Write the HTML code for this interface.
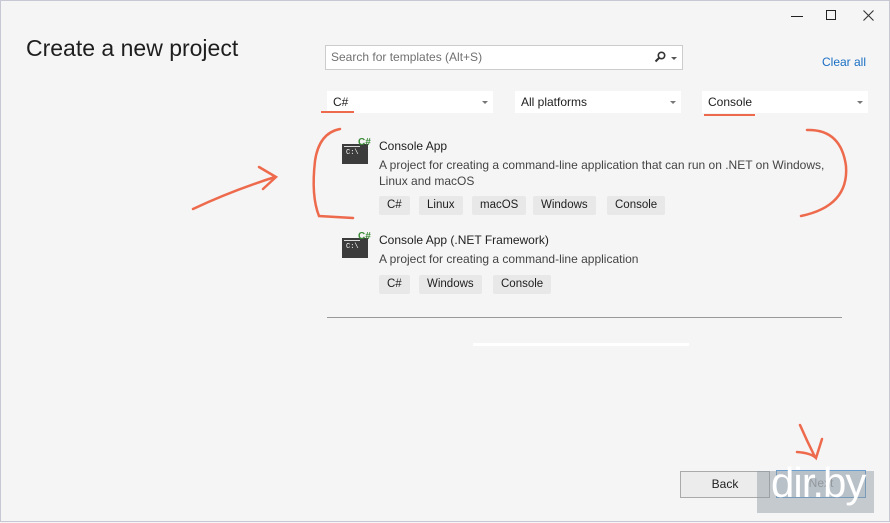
<!DOCTYPE html>
<html><head><meta charset="utf-8"><style>
*{margin:0;padding:0;box-sizing:border-box}
body{width:890px;height:522px;background:#f5f5f5;font-family:"Segoe UI","Liberation Sans",sans-serif;position:relative;overflow:hidden;border:1px solid #c8c8d4;color:#1e1e1e}
.a{position:absolute}
h1{position:absolute;left:25px;top:34px;font-size:23px;font-weight:normal;color:#1e1e1e}
.search{left:324px;top:44px;width:358px;height:25px;background:#fff;border:1px solid #ccc;font-size:12px;color:#717171;padding:4px 5px}
.dd{background:#fff;height:22px;font-size:12px;padding:4px 6px;color:#1e1e1e}
.arr{position:absolute;right:5px;top:10px;width:0;height:0;border-left:3px solid transparent;border-right:3px solid transparent;border-top:3px solid #777}
.t{font-size:12px;color:#1e1e1e}
.d{font-size:12px;color:#444;line-height:16px}
.tag{position:absolute;height:19px;background:#e8e8e8;border-radius:2px;font-size:11.5px;padding:3px 8px;color:#1e1e1e;line-height:13px}
.ic{position:absolute;width:26px;height:20px;background:#3c3c3c}
.ic:before{content:"";position:absolute;left:2px;top:2px;width:16px;height:1px;background:#ddd}
.ic span{position:absolute;left:4px;top:5px;color:#fff;font-size:7px;font-family:"Liberation Mono",monospace}
.cs{position:absolute;color:#388a34;font-size:10px;font-weight:bold}
.red{position:absolute;background:#ee6a4d}
</style></head><body>
<div class="a" style="left:790px;top:15px;width:12px;height:1px;background:#222"></div>
<div class="a" style="left:825px;top:9px;width:10px;height:10px;border:1px solid #222"></div>
<svg class="a" style="left:862px;top:9px" width="11" height="11"><path d="M0.5 0.5L10.5 10.5M10.5 0.5L0.5 10.5" stroke="#333" stroke-width="1.1"/></svg>
<h1>Create a new project</h1>
<div class="a search">Search for templates (Alt+S)
<svg style="position:absolute;right:16px;top:5px" width="12" height="12"><circle cx="7.5" cy="4.5" r="3.2" fill="none" stroke="#333" stroke-width="1.6"/><path d="M5.5 6.5L1.5 10.5" stroke="#333" stroke-width="2"/></svg>
<div style="position:absolute;right:5px;top:11px;border-left:3px solid transparent;border-right:3px solid transparent;border-top:3px solid #555"></div></div>
<div class="a" style="left:821px;top:54px;font-size:12px;color:#1a6fc4">Clear all</div>
<div class="a dd" style="left:326px;top:90px;width:166px">C#<div class="arr"></div></div>
<div class="a dd" style="left:514px;top:90px;width:166px">All platforms<div class="arr"></div></div>
<div class="a dd" style="left:701px;top:90px;width:166px">Console<div class="arr"></div></div>
<div class="red" style="left:320px;top:110px;width:33px;height:2px"></div>
<div class="red" style="left:703px;top:113px;width:51px;height:2px"></div>

<div class="ic" style="left:341px;top:143px"><span>C:\</span></div><div class="cs" style="left:357px;top:136px">C#</div>
<div class="a t" style="left:378px;top:138px">Console App</div>
<div class="a d" style="left:378px;top:156px;width:460px">A project for creating a command-line application that can run on .NET on Windows, Linux and macOS</div>
<div class="tag" style="left:378px;top:195px">C#</div>
<div class="tag" style="left:418px;top:195px">Linux</div>
<div class="tag" style="left:471px;top:195px">macOS</div>
<div class="tag" style="left:532px;top:195px">Windows</div>
<div class="tag" style="left:606px;top:195px">Console</div>

<div class="ic" style="left:341px;top:237px"><span>C:\</span></div><div class="cs" style="left:357px;top:230px">C#</div>
<div class="a t" style="left:378px;top:232px">Console App (.NET Framework)</div>
<div class="a d" style="left:378px;top:250px">A project for creating a command-line application</div>
<div class="tag" style="left:378px;top:274px">C#</div>
<div class="tag" style="left:418px;top:274px">Windows</div>
<div class="tag" style="left:492px;top:274px">Console</div>
<div class="a" style="left:326px;top:316px;width:515px;height:1px;background:#999"></div>
<div class="a" style="left:472px;top:342px;width:216px;height:3px;background:#fff"></div>

<svg class="a" style="left:0;top:0" width="890" height="522">
<g fill="none" stroke="#ee6a4d" stroke-width="2.5" stroke-linecap="round">
<path d="M192 208 Q230 190 274 176 M258 166 L275 176 L262 188"/>
<path d="M339 128 Q318 132 314 160 Q310 195 318 215 L352 217"/>
<path d="M806 129 Q840 128 845 165 Q848 205 800 215"/>
<path d="M799 424 Q806 440 814 456 M796 451 Q810 452 815 457 L821 438"/>
</g></svg>

<div class="a" style="left:679px;top:470px;width:90px;height:27px;background:#ececec;border:1px solid #aaa;font-size:12px;text-align:center;padding-top:5px">Back</div>
<div class="a" style="left:775px;top:469px;width:90px;height:28px;background:#dde2ea;border:1px solid #6a9ed0;font-size:12px;color:#999;text-align:center;padding-top:5px">Next</div>
<div class="a" style="left:756px;top:470px;width:117px;height:42px;background:rgba(140,150,160,.45)"></div>
<div class="a" style="left:770px;top:458px;font-size:42px;color:#fff;font-family:'Liberation Sans',sans-serif;letter-spacing:-1px">dir.by</div>
</body></html>
